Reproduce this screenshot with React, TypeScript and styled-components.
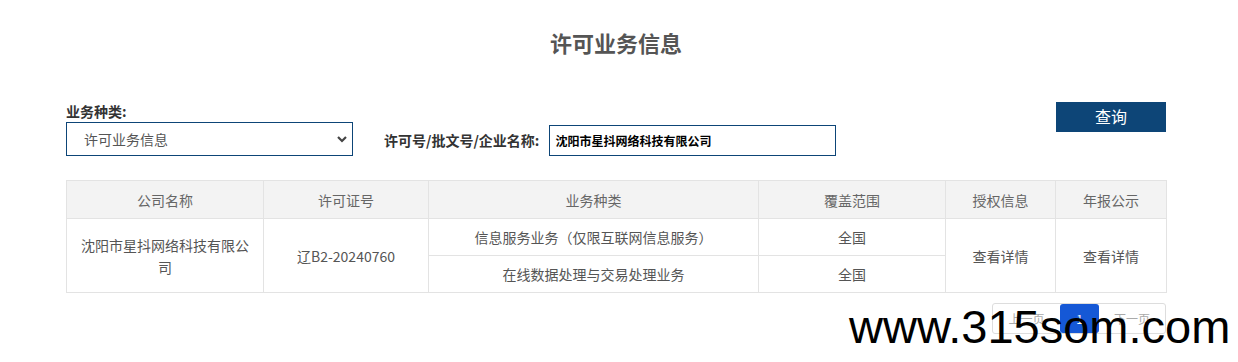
import React from "react";
import styled, { createGlobalStyle } from "styled-components";

const GlobalStyle = createGlobalStyle`
  html, body { margin: 0; padding: 0; background: #fff; }
  body { font-family: "Noto Sans CJK SC", "Noto Sans", sans-serif; color: #333; }
  * { box-sizing: border-box; }
`;

const Page = styled.div`
  position: relative;
  width: 1238px;
  height: 362px;
  padding: 27px 72px 0 66px;
  overflow: hidden;
`;

const Title = styled.h1`
  margin: 0;
  text-align: center;
  font-size: 22px;
  line-height: 30px;
  font-weight: 700;
  color: #555;
`;

const FilterBar = styled.div`
  display: flex;
  align-items: flex-start;
  margin-top: 45px;
`;

const Field = styled.div`
  display: flex;
  flex-direction: column;
  width: 287px;
`;

const Label = styled.label`
  font-size: 14px;
  font-weight: 700;
  color: #333;
  line-height: 19px;
  white-space: nowrap;
`;

const SelectWrap = styled.div`
  position: relative;
  height: 34px;
  margin-top: 1px;
  border: 1px solid #0d4577;
  display: flex;
  align-items: center;
  padding-left: 17px;
  font-size: 14px;
  color: #555;
`;

const Chevron = styled.svg`
  position: absolute;
  right: 4px;
  top: 11px;
`;

const InlineField = styled.div`
  display: flex;
  align-items: center;
  margin-left: 31px;
  margin-top: 23px;
`;

const TextBox = styled.div`
  width: 287px;
  height: 31px;
  margin-left: 10px;
  border: 1px solid #0d4577;
  display: flex;
  align-items: center;
  padding-left: 5px;
  font-size: 12px;
  font-weight: 700;
  color: #000;
`;

const SearchButton = styled.button`
  margin-left: auto;
  width: 110px;
  height: 30px;
  border: none;
  background: #0d4577;
  color: #fff;
  font-family: inherit;
  font-size: 16px;
  padding: 0 0 2px;
  cursor: pointer;
`;

const Table = styled.table`
  margin-top: 24px;
  width: 1100px;
  border-collapse: collapse;
  table-layout: fixed;
  font-size: 14px;
  color: #555;
`;

const Th = styled.th`
  height: 38px;
  background: #f3f3f3;
  border: 1px solid #e3e3e3;
  font-weight: 400;
  color: #666;
  text-align: center;
`;

const Td = styled.td`
  height: 37px;
  border: 1px solid #e3e3e3;
  text-align: center;
  padding: 0 10px;
  line-height: 22px;
`;

const Pager = styled.div`
  display: flex;
  justify-content: flex-end;
  margin-top: 10px;
`;

const PagerBox = styled.div`
  display: flex;
  height: 31px;
  border: 1px solid #ddd;
  border-radius: 3px;
  overflow: hidden;
`;

const PageItem = styled.div<{ $active?: boolean; $w: number }>`
  width: ${(p) => p.$w}px;
  display: flex;
  align-items: center;
  justify-content: center;
  font-size: 12px;
  color: ${(p) => (p.$active ? "#fff" : "#aaa")};
  background: ${(p) => (p.$active ? "#1558d6" : "transparent")};
  border-radius: ${(p) => (p.$active ? "3px" : "0")};
`;

const Watermark = styled.div`
  position: absolute;
  left: 849px;
  top: 299px;
  font-family: "Liberation Sans", Arial, sans-serif;
  font-size: 47px;
  color: #000;
  white-space: nowrap;
`;

export default function App() {
  return (
    <>
      <GlobalStyle />
      <Page>
        <Title>许可业务信息</Title>
        <FilterBar>
          <Field>
            <Label>业务种类:</Label>
            <SelectWrap>
              许可业务信息
              <Chevron width="12" height="10" viewBox="0 0 12 10">
                <path d="M2 3 L6 7 L10 3" fill="none" stroke="#444" strokeWidth="2.2" />
              </Chevron>
            </SelectWrap>
          </Field>
          <InlineField>
            <Label>许可号/批文号/企业名称:</Label>
            <TextBox>沈阳市星抖网络科技有限公司</TextBox>
          </InlineField>
          <SearchButton>查询</SearchButton>
        </FilterBar>
        <Table>
          <colgroup>
            <col style={{ width: 197 }} />
            <col style={{ width: 165 }} />
            <col style={{ width: 330 }} />
            <col style={{ width: 187 }} />
            <col style={{ width: 110 }} />
            <col style={{ width: 111 }} />
          </colgroup>
          <thead>
            <tr>
              <Th>公司名称</Th>
              <Th>许可证号</Th>
              <Th>业务种类</Th>
              <Th>覆盖范围</Th>
              <Th>授权信息</Th>
              <Th>年报公示</Th>
            </tr>
          </thead>
          <tbody>
            <tr>
              <Td rowSpan={2}>沈阳市星抖网络科技有限公司</Td>
              <Td rowSpan={2}>辽B2-20240760</Td>
              <Td>信息服务业务（仅限互联网信息服务）</Td>
              <Td>全国</Td>
              <Td rowSpan={2}>查看详情</Td>
              <Td rowSpan={2}>查看详情</Td>
            </tr>
            <tr>
              <Td>在线数据处理与交易处理业务</Td>
              <Td>全国</Td>
            </tr>
          </tbody>
        </Table>
        <Pager>
          <PagerBox>
            <PageItem $w={67}>上一页</PageItem>
            <PageItem $w={39} $active>1</PageItem>
            <PageItem $w={66}>下一页</PageItem>
          </PagerBox>
        </Pager>
        <Watermark>www.315som.com</Watermark>
      </Page>
    </>
  );
}
